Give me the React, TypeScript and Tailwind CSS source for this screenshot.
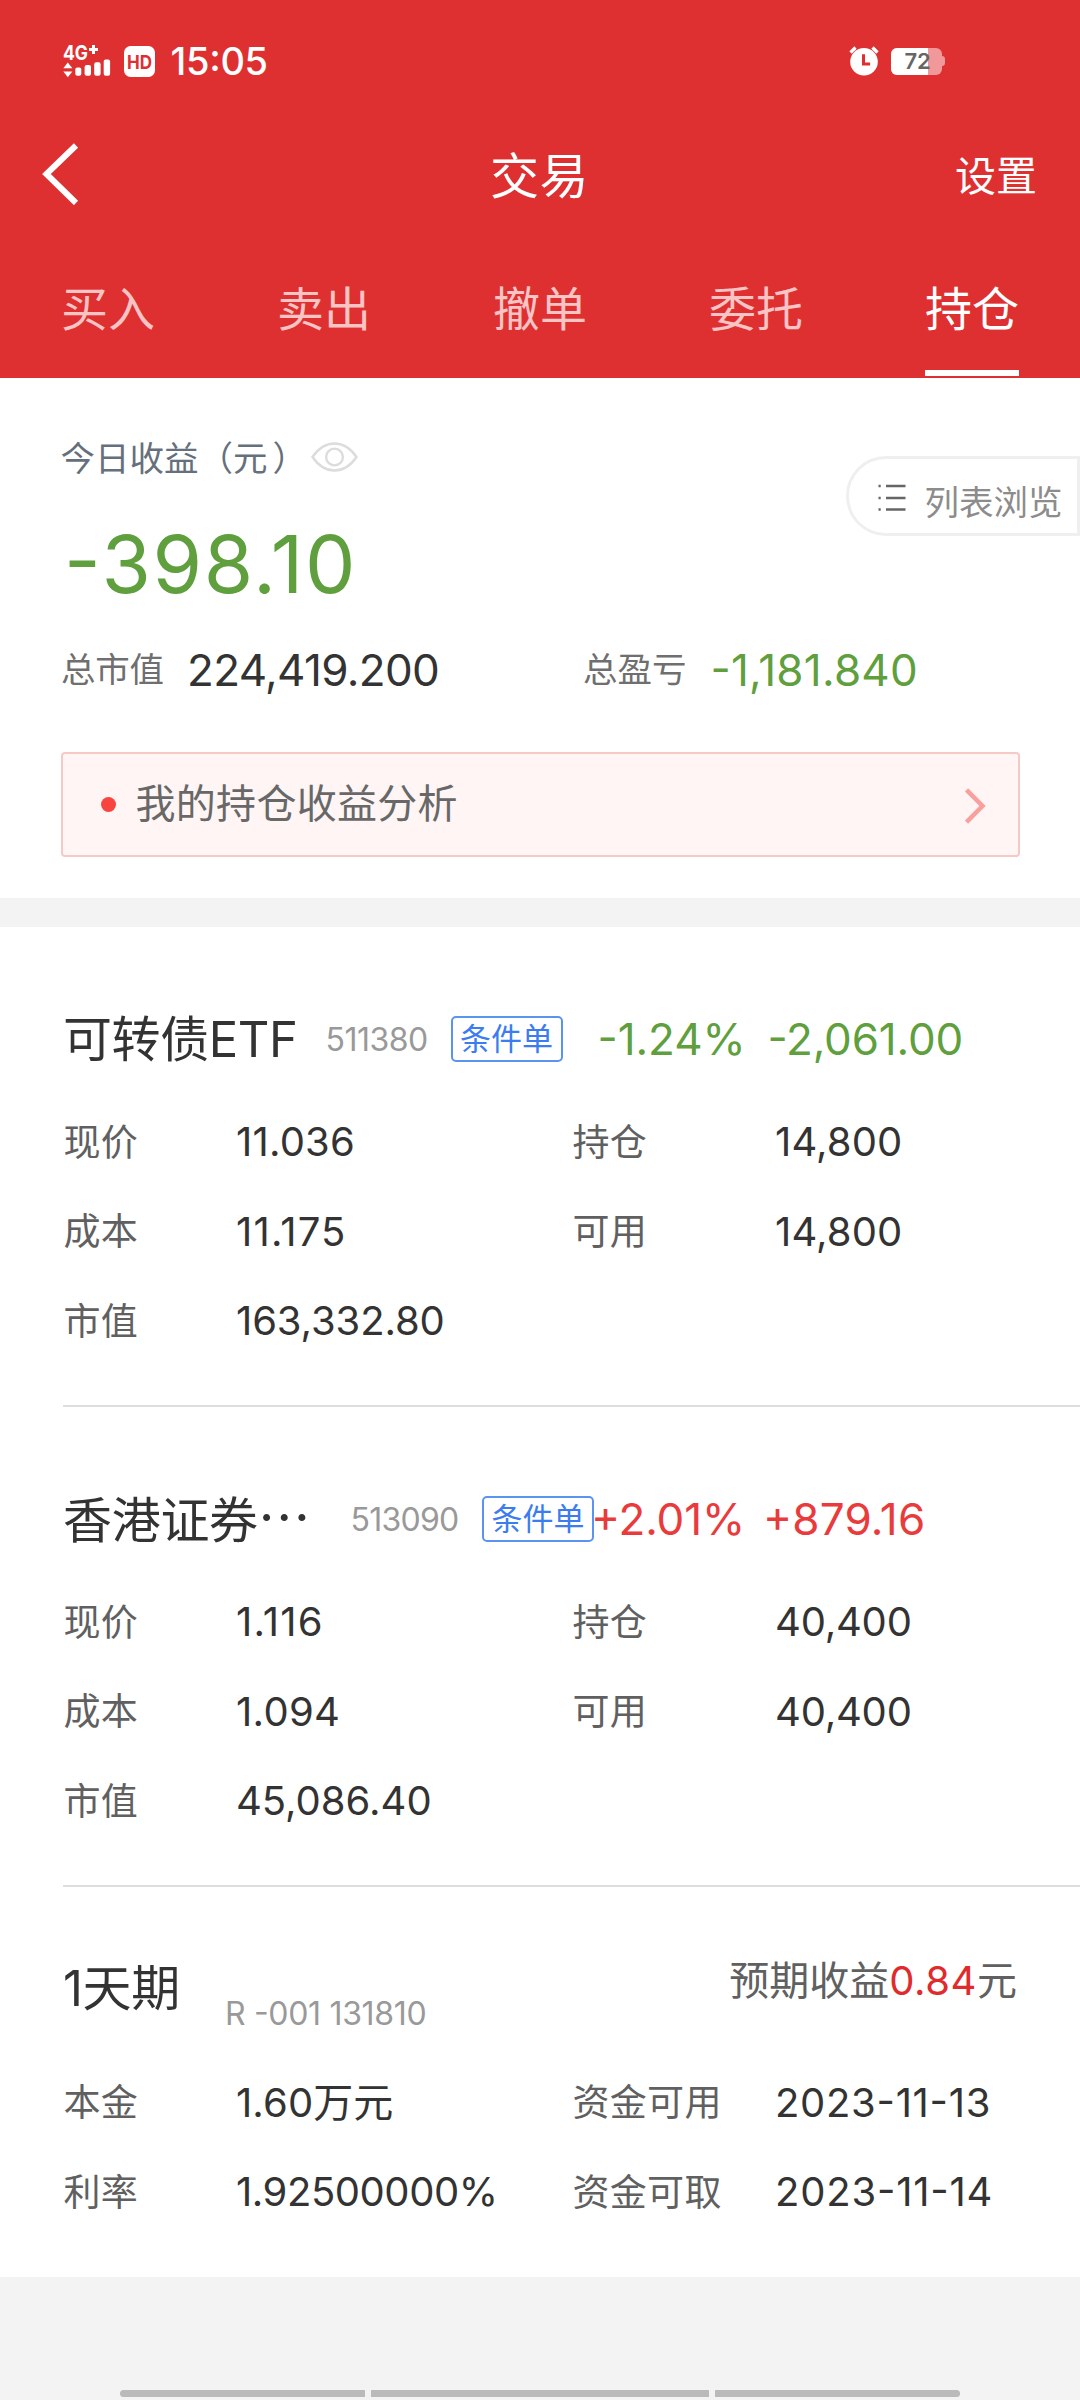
import React from "react";

type Field = { label: string; value: string; track: string };

type Holding = {
  name: string;
  truncated?: boolean;
  nameClass: string;
  code: string;
  codeClass: string;
  percent: string;
  percentClass: string;
  amount: string;
  amountClass: string;
  color: string;
  fields: (Field | null)[];
};

const tabs = ["买入", "卖出", "撤单", "委托", "持仓"];
const activeTab = "持仓";

const holdings: Holding[] = [
  {
    name: "可转债ETF",
    nameClass: "w-[262.5px] tracking-[-0.4px]",
    code: "511380",
    codeClass: "w-[125px] tracking-[-0.5px]",
    percent: "-1.24%",
    percentClass: "ml-[35px] w-[170px] tracking-[-0.08px]",
    amount: "-2,061.00",
    amountClass: "tracking-[-0.18px]",
    color: "text-[#5f9f3d]",
    fields: [
      { label: "现价", value: "11.036", track: "tracking-[0.2px]" },
      { label: "持仓", value: "14,800", track: "tracking-[0.13px]" },
      { label: "成本", value: "11.175", track: "tracking-[1.2px]" },
      { label: "可用", value: "14,800", track: "tracking-[0.13px]" },
      { label: "市值", value: "163,332.80", track: "tracking-[-0.1px]" },
      null,
    ],
  },
  {
    name: "香港证券",
    truncated: true,
    nameClass: "w-[287.5px] tracking-[-0.3px]",
    code: "513090",
    codeClass: "w-[131.5px] tracking-[-0.75px]",
    percent: "+2.01%",
    percentClass: "-ml-[3px] w-[172px] tracking-[-0.15px]",
    amount: "+879.16",
    amountClass: "tracking-[0.2px]",
    color: "text-[#e93b3c]",
    fields: [
      { label: "现价", value: "1.116", track: "tracking-[1.2px]" },
      { label: "持仓", value: "40,400", track: "tracking-[-0.2px]" },
      { label: "成本", value: "1.094", track: "tracking-[0.3px]" },
      { label: "可用", value: "40,400", track: "tracking-[-0.2px]" },
      { label: "市值", value: "45,086.40", track: "tracking-normal" },
      null,
    ],
  },
];

const repoFields: Field[] = [
  { label: "本金", value: "1.60万元", track: "tracking-[0.1px]" },
  { label: "资金可用", value: "2023-11-13", track: "tracking-[0.7px]" },
  { label: "利率", value: "1.92500000%", track: "tracking-[-0.45px]" },
  { label: "资金可取", value: "2023-11-14", track: "tracking-[0.8px]" },
];

function SignalIcon() {
  return (
    <svg className="h-[34px] w-[49px] overflow-visible" viewBox="0 0 49 34" fill="#fff">
      <text x="0" y="16.2" fontSize="20" fontWeight="700" fontFamily="Inter, sans-serif" textLength="25" lengthAdjust="spacingAndGlyphs">
        4G
      </text>
      <path d="M30.5 1v9M26 5.5h9" stroke="#fff" strokeWidth="3" />
      <path d="M0.3 24.3L4.8 18.6l4.6 5.7zM0.3 27.4h9.1L4.8 33.2z" />
      <rect x="12.3" y="23.5" width="6" height="8.3" rx="2" />
      <rect x="21.6" y="21" width="6.4" height="10.8" rx="2" />
      <rect x="31.2" y="18.2" width="6.4" height="13.6" rx="2" />
      <rect x="40.7" y="15.4" width="6.4" height="16.4" rx="2" />
    </svg>
  );
}

function AlarmIcon() {
  return (
    <svg className="h-[30px] w-[30px]" viewBox="0 0 30 30">
      <circle cx="15" cy="15.8" r="13.8" fill="#fff" />
      <path d="M1.5 6.5l5-5M28.5 6.5l-5-5" stroke="#fff" strokeWidth="3.2" />
      <path d="M14.5 8.2v9.8h6.6" fill="none" stroke="#df3031" strokeWidth="3" />
    </svg>
  );
}

function StatusBar() {
  return (
    <div className="flex h-[122px] items-center pl-[63px]">
      <SignalIcon />
      <svg className="ml-[12px] h-[31px] w-[31px]" viewBox="0 0 31 31">
        <rect width="31" height="31" rx="6.5" fill="#fff" />
        <text x="3" y="22.5" fontSize="19" fontWeight="700" fill="#df3031" fontFamily="Inter, sans-serif" textLength="25" lengthAdjust="spacingAndGlyphs">
          HD
        </text>
      </svg>
      <span className="ml-[15.5px] w-[678.5px] text-[38px] font-medium tracking-[-0.3px]">15:05</span>
      <AlarmIcon />
      <div className="ml-[12px] flex items-center">
        <div className="relative flex h-[27px] w-[51px] items-center overflow-hidden rounded-[6px] bg-[#f1989a]">
          <div className="h-full w-[37px] bg-white" />
          <span className="absolute left-[13.5px] top-0 text-[22px] leading-[27px] font-semibold tracking-[-0.2px] text-[#666]">72</span>
        </div>
        <div className="h-[10px] w-[3px] rounded-r-[3px] bg-[#f1989a]" />
      </div>
    </div>
  );
}

function Header() {
  return (
    <header className="h-[378px] bg-[#df3031] text-white">
      <StatusBar />
      <div className="grid h-[106px] grid-cols-[1fr_auto_1fr] items-center pl-[42px] pr-[43px]">
        <svg className="-mt-0.5 h-[62px] w-[38px]" viewBox="0 0 38 62" fill="none" stroke="#fff" strokeWidth="6">
          <path d="M34 2.5L4.4 31 34 60" />
        </svg>
        <h1 className="mt-1 text-[49px] tracking-[0.5px] leading-[60px]">交易</h1>
        <span className="mt-0.5 justify-self-end text-[41px] leading-[60px]">设置</span>
      </div>
      <nav className="grid h-[150px] grid-cols-5 text-[47px]">
        {tabs.map((tab) => (
          <div key={tab} className="flex justify-center">
            <span
              className={
                tab === activeTab
                  ? "relative leading-[162px] after:absolute after:inset-x-0 after:top-[142px] after:h-[6px] after:bg-white"
                  : "leading-[162px] text-[#fac4c5]"
              }
            >
              {tab}
            </span>
          </div>
        ))}
      </nav>
    </header>
  );
}

function Summary() {
  return (
    <section className="relative h-[520px] bg-white px-[61px] pt-[60px]">
      <div className="flex h-[42px] items-center">
        <span className="-ml-[0.5px] text-[34.5px] text-[#66707c]">
          今日收益（<span className="tracking-[5px]">元</span>）
        </span>
        <svg className="ml-[4px] -mt-1 h-[30px] w-[47px]" viewBox="0 0 47 30" fill="none" stroke="#dcdcdc" strokeWidth="2.4">
          <path d="M1.5 15C8 5.500 15.500 1.500 23.500 1.500S39 5.500 45.500 15C39 24.500 31.500 28.500 23.500 28.500S8 24.500 1.500 15z" />
          <circle cx="23.500" cy="15" r="8.400" />
        </svg>
      </div>
      <div className="ml-[3px] text-[80px] leading-[167px] tracking-[1.6px] text-[#5f9f3d]">-398.10</div>
      <div className="flex h-[46px] items-center">
        <span className="w-[126px] text-[34.5px] tracking-[-0.3px] text-[#6f6f6f]">总市值</span>
        <span className="w-[396px] text-[44px] tracking-[-0.65px] text-[#333]">224,419.200</span>
        <span className="w-[127.5px] text-[34.5px] text-[#6f6f6f]">总盈亏</span>
        <span className="text-[44px] tracking-[0.24px] text-[#5f9f3d]">-1,181.840</span>
      </div>
      <div className="mt-[59px] -mr-px -ml-[0.5px] flex h-[105px] items-center rounded-[4px] border-2 border-[#f7c9c6] bg-[#fff5f4] pr-[32px] pl-[38px]">
        <span className="size-[15px] rounded-full bg-[#f8453f]" />
        <span className="-mt-0.5 ml-[20px] flex-1 text-[40px] tracking-[0.3px] text-[#686868]">我的持仓收益分析</span>
        <svg className="mt-0.5 h-[36px] w-[22px]" viewBox="0 0 22 36" fill="none" stroke="#f9a09f" strokeWidth="4.500">
          <path d="M2.500 1.800L18.500 18 2.500 34.200" />
        </svg>
      </div>
      <div className="absolute right-0 top-[78px] flex h-[80px] w-[234px] items-center rounded-l-[40px] border-[3px] border-[#efefef] bg-white pl-[28.5px]">
        <svg className="mt-[3px] h-[28px] w-[28px]" viewBox="0 0 28 28" stroke="#666" strokeWidth="2.500">
          <path d="M.5 2h2.200M.5 14h2.200M.5 25.500h2.200M8 2h19.500M8 14h19.500M8 25.500h19.500" />
        </svg>
        <span className="ml-[19px] mt-[14px] text-[34.5px] leading-[40px] text-[#8c8c8c]">列表浏览</span>
      </div>
    </section>
  );
}

function FieldGrid({ fields }: { fields: (Field | null)[] }) {
  return (
    <div className="grid auto-rows-[89.5px] grid-cols-[173px_336px_203px_1fr] items-center">
      {fields.map((field, i) =>
        field ? (
          <React.Fragment key={i}>
            <span className="pl-[0.5px] text-[37px] tracking-[0.3px] text-[#606060]">{field.label}</span>
            <span className={"text-[40px] text-[#333] " + field.track}>{field.value}</span>
          </React.Fragment>
        ) : (
          <span key={i} className="col-span-2" />
        )
      )}
    </div>
  );
}

function HoldingCard({ item }: { item: Holding }) {
  return (
    <article className="ml-[63px] h-[480px] border-b-2 border-[#dedede] pt-[82px]">
      <div className="mb-[28.5px] flex h-[60px] items-center whitespace-nowrap">
        <span className={"mt-0.5 shrink-0 text-[49px] leading-[60px] text-[#333] " + item.nameClass}>
          {item.name}
          {item.truncated && <span className="font-['Noto_Sans_CJK_SC'] text-[53px] leading-none">…</span>}
        </span>
        <span className={"mt-px shrink-0 text-[32px] text-[#999] " + item.codeClass}>{item.code}</span>
        <span className="flex h-[46px] w-[112px] shrink-0 items-center justify-center rounded-[5px] border-2 border-[#5b93f2] text-[31px] text-[#3b7cf0]">
          条件单
        </span>
        <span className={"shrink-0 text-[44px] " + item.color + " " + item.percentClass}>{item.percent}</span>
        <span className={"shrink-0 text-[44px] " + item.color + " " + item.amountClass}>{item.amount}</span>
      </div>
      <FieldGrid fields={item.fields} />
    </article>
  );
}

function RepoCard() {
  return (
    <article className="ml-[63px] h-[390px]">
      <div className="flex h-[171px] items-start whitespace-nowrap pr-[63px]">
        <span className="mt-[72px] w-[162px] text-[49px] leading-[60px] tracking-[-0.4px] text-[#333]">1天期</span>
        <span className="mt-[106px] flex-1 text-[32px] leading-[41px] tracking-[-0.32px] text-[#999]">R -001 131810</span>
        <span className="mt-[64px] text-[40px] leading-[60px] text-[#606060]">
          预期收益<span className="tracking-[0.6px] text-[#e02a2c]">0.84</span>元
        </span>
      </div>
      <FieldGrid fields={repoFields} />
    </article>
  );
}

export default function App() {
  return (
    <div
      lang="zh-CN"
      className="flex h-[2400px] w-[1080px] flex-col overflow-hidden bg-[#f3f3f3] font-['Inter','Noto_Sans_CJK_SC',sans-serif] [font-feature-settings:'case']"
    >
      <Header />
      <Summary />
      <main className="mt-[29px] bg-white">
        {holdings.map((item) => (
          <HoldingCard key={item.code} item={item} />
        ))}
        <RepoCard />
      </main>
      <div className="mt-auto mb-[3px] flex h-[7px] justify-center gap-[6px]">
        <span className="w-[245px] rounded-l-full bg-[#bababa]" />
        <span className="w-[338px] bg-[#bababa]" />
        <span className="w-[245px] rounded-r-full bg-[#bababa]" />
      </div>
    </div>
  );
}
